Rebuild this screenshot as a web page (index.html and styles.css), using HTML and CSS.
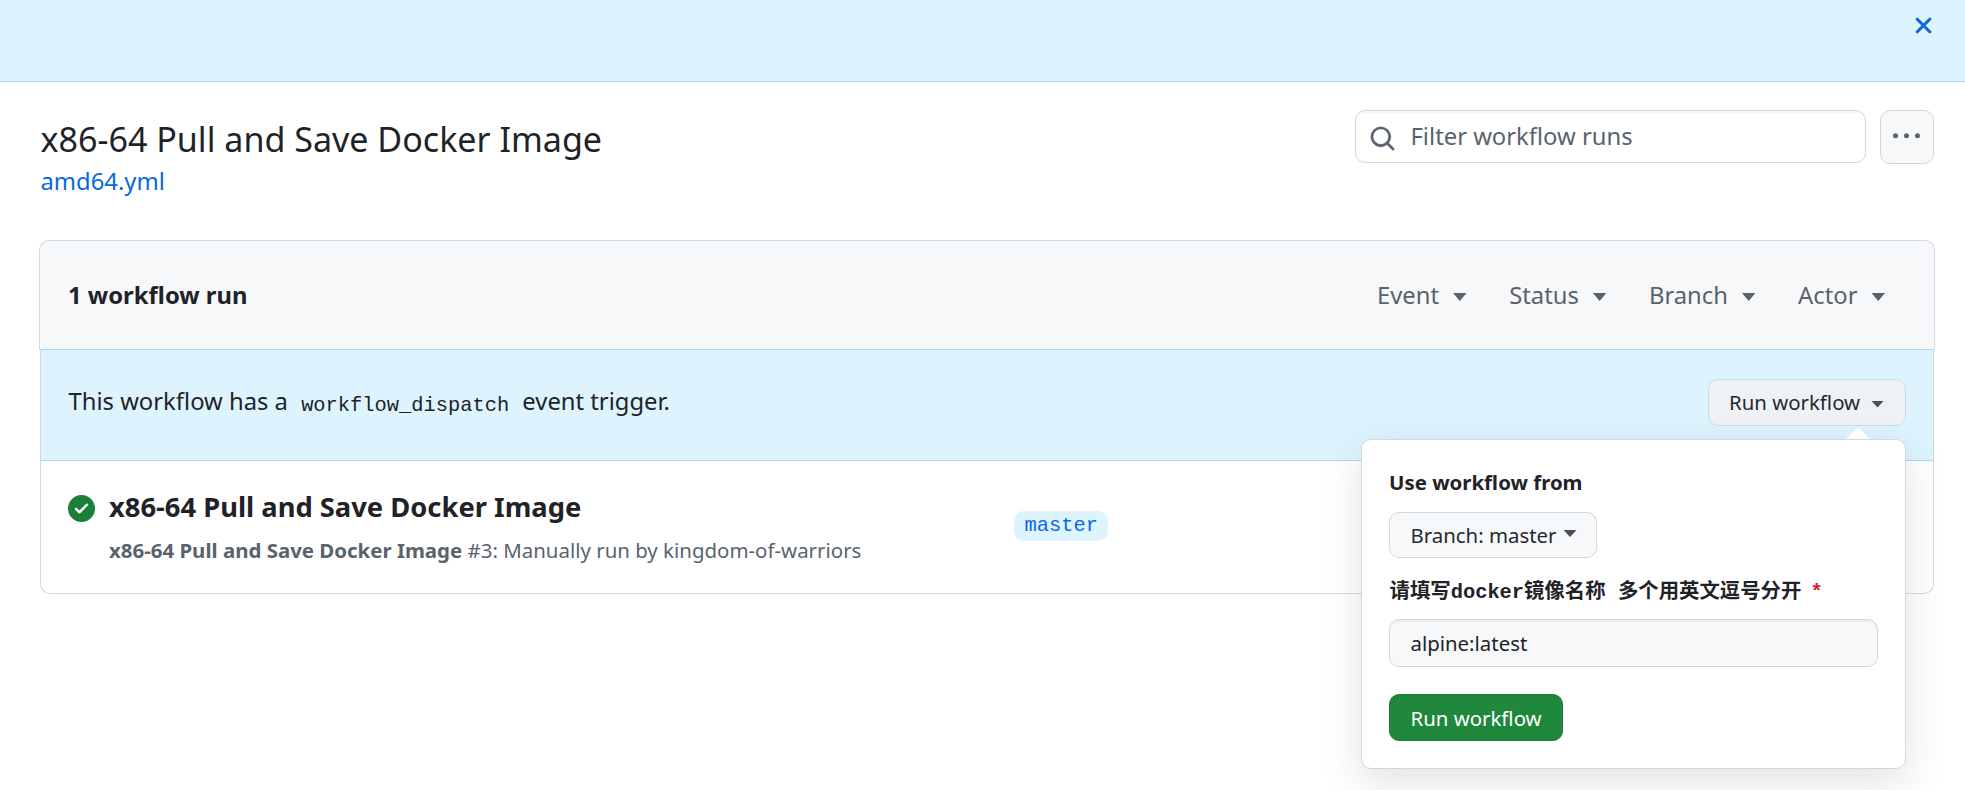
FILE: index.html
```html
<!DOCTYPE html>
<html lang="en">
<head>
<meta charset="utf-8">
<title>Workflow runs</title>
<link rel="stylesheet" href="styles.css">
</head>
<body>
<div class="banner">
  <button class="banner-close" aria-label="Dismiss">
    <svg viewBox="0 0 16 16" width="27" height="27"><path d="M3.72 3.72a.75.75 0 0 1 1.06 0L8 6.94l3.22-3.22a.749.749 0 0 1 1.275.326.749.749 0 0 1-.215.734L9.06 8l3.22 3.22a.749.749 0 0 1-.326 1.275.749.749 0 0 1-.734-.215L8 9.06l-3.22 3.22a.751.751 0 0 1-1.042-.018.751.751 0 0 1-.018-1.042L6.94 8 3.72 4.78a.75.75 0 0 1 0-1.06Z"/></svg>
  </button>
</div>
<main class="page">
  <header class="page-head">
    <div class="heading">
      <h1 class="title">x86-64 Pull and Save Docker Image</h1>
      <a class="file-link">amd64.yml</a>
    </div>
    <div class="tools">
      <div class="search">
        <svg viewBox="0 0 16 16" width="27" height="27"><path d="M10.68 11.74a6 6 0 0 1-7.922-8.982 6 6 0 0 1 8.982 7.922l3.04 3.04a.749.749 0 0 1-.326 1.275.749.749 0 0 1-.734-.215ZM11.5 7a4.499 4.499 0 1 0-8.997 0A4.499 4.499 0 0 0 11.5 7Z"/></svg>
        <span>Filter workflow runs</span>
      </div>
      <button class="kebab" aria-label="More options">
        <svg viewBox="0 0 16 16" width="27" height="27"><path d="M8 9a1.5 1.5 0 1 0 0-3 1.5 1.5 0 0 0 0 3ZM1.5 9a1.5 1.5 0 1 0 0-3 1.5 1.5 0 0 0 0 3Zm13 0a1.5 1.5 0 1 0 0-3 1.5 1.5 0 0 0 0 3Z"/></svg>
      </button>
    </div>
  </header>
  <section class="runs">
    <div class="runs-head">
      <strong class="count">1 workflow run</strong>
      <nav class="filters">
        <span class="filter">Event<i class="caret"></i></span>
        <span class="filter">Status<i class="caret"></i></span>
        <span class="filter">Branch<i class="caret"></i></span>
        <span class="filter">Actor<i class="caret"></i></span>
      </nav>
    </div>
    <div class="runs-body">
      <div class="dispatch">
        <p class="dispatch-text">This workflow has a <code class="event">workflow_dispatch</code> event trigger.</p>
        <div class="dispatch-menu">
          <button class="btn btn-active">Run workflow<i class="caret"></i></button>
          <div class="popover">
            <div class="popover-title">Use workflow from</div>
            <button class="btn btn-branch">Branch: master<i class="caret"></i></button>
            <label class="field-label">请填写docker镜像名称 多个用英文逗号分开<span class="required">*</span></label>
            <div class="field">alpine:latest</div>
            <button class="btn btn-primary">Run workflow</button>
          </div>
        </div>
      </div>
      <div class="run">
        <svg class="run-status" viewBox="0 0 16 16" width="27" height="27"><path d="M8 16A8 8 0 1 1 8 0a8 8 0 0 1 0 16Zm3.78-9.72a.751.751 0 0 0-.018-1.042.751.751 0 0 0-1.042-.018L6.75 9.19 5.28 7.72a.751.751 0 0 0-1.042.018.751.751 0 0 0-.018 1.042l2 2a.75.75 0 0 0 1.06 0Z"/></svg>
        <div class="run-info">
          <div class="run-title">x86-64 Pull and Save Docker Image</div>
          <div class="run-meta"><b>x86-64 Pull and Save Docker Image</b> #3: Manually run by kingdom-of-warriors</div>
        </div>
        <span class="branch">master</span>
      </div>
    </div>
  </section>
</main>
</body>
</html>
```
FILE: styles.css
```css
* {
  box-sizing: border-box;
}

body {
  margin: 0;
  height: 790px;
  overflow: hidden;
  background: #fff;
  color: #1f2328;
  font-family: "Noto Sans", "Noto Sans CJK SC", sans-serif;
  font-size: 23.8px;
}

button {
  margin: 0;
  padding: 0;
  border: 0;
  background: none;
  color: inherit;
  font: inherit;
}

svg {
  display: block;
  flex: none;
  fill: currentColor;
}

.banner {
  display: flex;
  justify-content: flex-end;
  align-items: flex-start;
  height: 82px;
  padding: 12px 28px 0 0;
  background: #ddf4ff;
  border-bottom: 1px solid #a6d7ff;
}

.banner-close {
  color: #0969da;
}

.banner-close svg {
  stroke: currentColor;
  stroke-width: 0.35;
}

.page {
  padding: 28px 30px 0 39px;
}

.page-head {
  display: flex;
  justify-content: space-between;
  height: 130px;
  padding-right: 1px;
}

.heading {
  padding: 4px 0 0 1.5px;
}

.title {
  margin: 0;
  font-size: 34.05px;
  font-weight: 400;
  line-height: 51px;
}

.file-link {
  display: block;
  color: #0969da;
  line-height: 33px;
}

.tools {
  display: flex;
  align-items: flex-start;
  gap: 14px;
}

.search {
  display: flex;
  align-items: center;
  gap: 14.5px;
  width: 511px;
  height: 53px;
  padding-left: 13px;
  border: 1px solid #d1d9e0;
  border-radius: 10px;
  box-shadow: inset 0 2px 0 rgba(208, 215, 222, 0.2);
  color: #59636e;
  line-height: 33px;
}

.search svg {
  margin-top: 3px;
  stroke: currentColor;
  stroke-width: 0.15;
}

.kebab {
  display: flex;
  align-items: center;
  justify-content: center;
  width: 54px;
  height: 54px;
  padding: 0 1px 2px 0;
  border: 1px solid #d1d9e0;
  border-radius: 10px;
  background: #f6f8fa;
  color: #59636e;
}

.runs-head {
  display: flex;
  align-items: center;
  justify-content: space-between;
  height: 110px;
  padding: 0 49px 2px 28px;
  border: 1px solid #d1d9e0;
  border-bottom: 0;
  border-radius: 10px 10px 0 0;
  background: #f6f8fa;
}

.count {
  font-weight: 700;
}

.filters {
  display: flex;
  gap: 42.6px;
  color: #59636e;
}

.filter {
  display: flex;
  align-items: center;
  gap: 14px;
}

.caret {
  flex: none;
  width: 13.5px;
  height: 8px;
  background: currentColor;
  clip-path: polygon(0 0, 100% 0, 50% 100%);
}

.filter .caret {
  margin-top: 5px;
}

.runs-body {
  height: 245px;
  margin: -1px 1px 0;
  border: 1px solid #d1d9e0;
  border-top: 0;
  border-radius: 0 0 10px 10px;
}

.dispatch {
  display: flex;
  align-items: flex-start;
  justify-content: space-between;
  height: 112px;
  padding: 29px 27px 0 27.5px;
  background: #ddf4ff;
  border: 1px solid #a6d7ff;
  border-width: 1px 0;
}

.dispatch-text {
  margin: 4px 0 0;
  line-height: 36px;
}

.event {
  padding: 0 7px;
  font-family: "Liberation Mono", monospace;
  font-size: 20.4px;
  line-height: 1;
  vertical-align: -1px;
}

.dispatch-menu {
  position: relative;
}

.btn {
  display: flex;
  align-items: center;
  height: 47px;
  padding: 0 20.5px;
  border: 1px solid #d1d9e0;
  border-radius: 10px;
  background: #f6f8fa;
  color: #25292e;
  font-size: 20.4px;
  line-height: 34px;
  white-space: nowrap;
}

.btn-active {
  width: 198px;
  justify-content: space-between;
  padding: 0 21px 1px 20px;
  background: #eff2f5;
}

.btn .caret {
  width: 13px;
  height: 7px;
  background: #4d5156;
}

.btn-active .caret {
  margin-top: 4px;
}

.popover {
  position: absolute;
  top: 60px;
  right: 0;
  width: 545px;
  height: 330px;
  padding: 25px 27px;
  border: 1px solid #d1d9e0;
  border-radius: 10px;
  background: #fff;
  box-shadow: 0 14px 41px rgba(66, 74, 83, 0.16);
  font-size: 20.4px;
}

.popover::before {
  content: "";
  position: absolute;
  top: -13px;
  right: 35px;
  width: 24px;
  height: 12px;
  background: #fff;
  clip-path: polygon(50% 0, 100% 100%, 0 100%);
}

.popover-title {
  font-weight: 700;
  line-height: 34px;
}

.btn-branch {
  gap: 7px;
  width: 208px;
  height: 46px;
  margin-top: 13px;
}

.btn-branch .caret {
  margin-top: -3px;
}

.field-label {
  display: flex;
  gap: 9px;
  height: 34px;
  margin-top: 18px;
  padding-left: 0.5px;
  font-family: "Liberation Mono", "Noto Sans CJK SC", monospace;
  font-weight: 700;
  line-height: 34px;
}

.required {
  color: #d1242f;
}

.field {
  height: 48px;
  margin-top: 9px;
  padding: 0 20.5px;
  border: 1px solid #d1d9e0;
  border-radius: 10px;
  background: #f6f8fa;
  box-shadow: inset 0 2px 0 rgba(208, 215, 222, 0.3);
  line-height: 46px;
}

.btn-primary {
  margin-top: 27px;
  border-color: #1f7f3a;
  background: #1f883d;
  color: #fff;
}

.run {
  display: flex;
  height: 132px;
  padding: 34px 27px 0;
}

.run-status {
  color: #1a7f37;
}

.run-info {
  width: 905px;
  margin: -9px 0 0 14px;
}

.run-title {
  font-size: 27.33px;
  font-weight: 700;
  line-height: 42px;
}

.run-meta {
  color: #59636e;
  font-size: 20.46px;
  line-height: 34px;
  margin-top: 5px;
}

.run-meta b {
  font-weight: 700;
}

.branch {
  height: 30px;
  margin-top: 16px;
  padding: 0 10.5px;
  border-radius: 10px;
  background: #ddf4ff;
  color: #0969da;
  font-family: "Liberation Mono", monospace;
  font-size: 20.4px;
  line-height: 29px;
}
```
